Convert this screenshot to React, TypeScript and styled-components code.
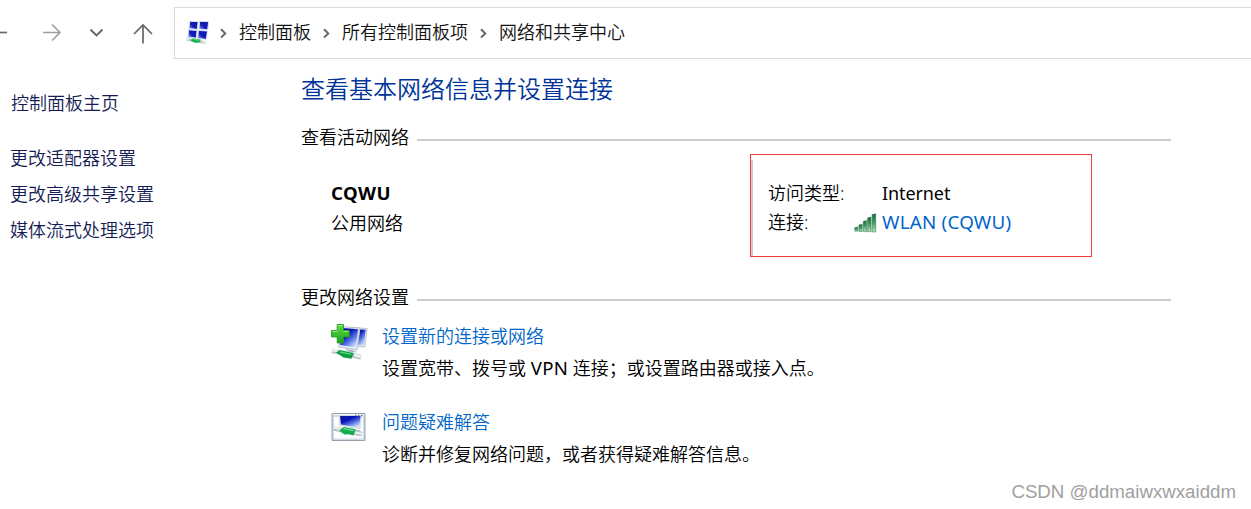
import React from "react";
import styled, { createGlobalStyle } from "styled-components";

const GlobalStyle = createGlobalStyle`
  body {
    margin: 0;
    background: #fff;
    overflow: hidden;
  }
`;

const Window = styled.div`
  position: relative;
  width: 1251px;
  height: 509px;
  overflow: hidden;
  background: #fff;
  color: #000;
  font-family: "Noto Sans", "Noto Sans CJK SC", sans-serif;
  font-size: 18px;
  font-weight: 350;
  white-space: nowrap;
`;

const Toolbar = styled.header`
  display: flex;
  height: 52px;
  padding-top: 7px;
`;

const NavButtons = styled.nav`
  flex: none;
  width: 174px;
  height: 52px;

  svg {
    display: block;
  }
`;

const AddressBar = styled.div`
  display: flex;
  align-items: center;
  box-sizing: border-box;
  flex: none;
  width: 1090px;
  height: 52px;
  padding-left: 10px;
  border: 1px solid #d9d9d9;
`;

const Crumb = styled.span`
  padding-bottom: 2px;
  line-height: 26px;
  color: #111;
`;

const Separator = styled.svg`
  flex: none;
  width: 31px;
  height: 14px;
`;

const Body = styled.div`
  display: flex;
`;

const Sidebar = styled.aside`
  display: flex;
  flex-direction: column;
  box-sizing: border-box;
  flex: none;
  width: 301px;
  padding: 31px 0 0 10px;
`;

const SideLink = styled.a<{ $home?: boolean }>`
  height: 26px;
  padding-left: ${(props) => (props.$home ? 1 : 0)}px;
  margin-bottom: ${(props) => (props.$home ? 29 : 10)}px;
  line-height: 26px;
  color: #151c55;
`;

const Main = styled.main`
  width: 870px;
  padding-top: 12px;
`;

const Title = styled.h1`
  margin: 0 0 18px;
  line-height: 36px;
  font-size: 24px;
  font-weight: 350;
  color: #003399;
`;

const SectionHeader = styled.div`
  display: flex;
  align-items: center;
  height: 24px;
  line-height: 24px;
`;

const Rule = styled.div`
  flex: 1;
  height: 2px;
  margin: 6px 0 0 8px;
  background: #cbcbcb;
`;

const ActiveNetwork = styled.div`
  display: flex;
  padding: 5px 0 28px 30px;
`;

const NetworkName = styled.div`
  box-sizing: border-box;
  width: 419px;
  padding-top: 24px;
  line-height: 30px;
`;

const Name = styled.div`
  font-size: 18.6px;
  font-weight: 700;
  letter-spacing: 0.5px;
`;

const AccessBox = styled.div`
  box-sizing: border-box;
  width: 342px;
  height: 103px;
  padding-top: 5px;
  border: 1px solid #f23b3b;
`;

const AccessDetails = styled.div`
  box-sizing: border-box;
  height: 96px;
  padding: 19px 0 0 15px;
  border-left: 2px solid #cbcbcb;
`;

const AccessRow = styled.div`
  display: grid;
  grid-template-columns: 86px 28px 1fr;
  align-items: center;
  height: 29px;
  line-height: 29px;
`;

const Latin = styled.span<{ $size?: number; $spacing?: number }>`
  font-size: ${(props) => props.$size || 18}px;
  font-weight: 380;
  letter-spacing: ${(props) => props.$spacing || 0}px;
`;

const Link = styled.a`
  color: #0066cc;
`;

const Tasks = styled.div`
  display: flex;
  flex-direction: column;
`;

const Task = styled.div`
  display: flex;
  height: 86px;
  padding-left: 30px;

  > svg {
    flex: none;
    margin: 14px 14px 0 0;
  }
`;

const TaskText = styled.div`
  padding-top: 11px;
  line-height: 32px;
`;

const Watermark = styled.div`
  position: absolute;
  right: 15px;
  bottom: 5px;
  line-height: 24px;
  font-family: "Liberation Sans", sans-serif;
  font-size: 18.7px;
  color: #a0a0a0;
`;

const NavIcons = () => (
  <svg width="174" height="52" fill="none" strokeWidth="1.7">
    <path d="M0 25.5H7" stroke="#666" />
    <path d="M43 25.5H59.5M52 17.5l8 8-8 8" stroke="#a0a0a0" />
    <path d="M90.5 22.5l6 6 6-6" stroke="#666" strokeWidth="1.9" />
    <path d="M143 36.5V18M134 27l9-9 9 9" stroke="#666" />
  </svg>
);

const Chevron = () => (
  <Separator viewBox="0 0 31 14" fill="none">
    <path d="M13 3.2l4.2 4.2-4.2 4.2" stroke="#666" strokeWidth="2" />
  </Separator>
);

const Gradients = () => (
  <svg width="0" height="0" style={{ position: "absolute" }}>
    <defs>
      <linearGradient id="screen" x1="0" y1="0" x2=".8" y2="1">
        <stop offset="0" stopColor="#10189c" />
        <stop offset=".38" stopColor="#0713b8" />
        <stop offset=".65" stopColor="#5271e2" />
        <stop offset="1" stopColor="#dcecff" />
      </linearGradient>
      <linearGradient id="tile" x1="1" y1="0" x2="0" y2="1">
        <stop offset="0" stopColor="#0710a5" />
        <stop offset=".6" stopColor="#1420bd" />
        <stop offset="1" stopColor="#a9c5f7" />
      </linearGradient>
      <linearGradient id="plus" x1="0" y1="0" x2="0" y2="1">
        <stop offset="0" stopColor="#64dc45" />
        <stop offset="1" stopColor="#16a51d" />
      </linearGradient>
      <linearGradient id="bar" x1="0" y1="0" x2="0" y2="1">
        <stop offset="0" stopColor="#176832" />
        <stop offset=".45" stopColor="#3d9460" />
        <stop offset="1" stopColor="#b6e8c5" />
      </linearGradient>
    </defs>
  </svg>
);

const AddressIcon = styled.svg`
  flex: none;
  width: 26px;
  height: 26px;
  margin-right: -3px;
`;

const NetworkIcon = () => (
  <AddressIcon viewBox="0 0 26 26">
    <g stroke="#dce5f3" strokeWidth="1" fill="url(#tile)">
      <path d="M4.8 1.3l8.3.3-.7 7.7-8.6-.6z" />
      <path d="M14.6 1.3l9 .4-.9 8-8.8-.5z" />
      <path d="M3.6 9.8l8.5.6-.8 7.6-8.4-.7z" />
      <path d="M13.4 10.4l9 .6-1 8.3-8.8-.7z" />
    </g>
    <path d="M1.4 19l19 3.6" stroke="#bcc8c5" strokeWidth="3" />
    <path d="M1.2 18.4l3 .6M17.5 21.7l3 .5" stroke="#edf3f0" strokeWidth="1.6" />
    <path d="M5.4 20.6l3-2.4 7.2 1.2-1.2 3.2-4.6.2z" fill="#12b24c" />
    <path d="M8.2 19.1l5.8 1" stroke="#62dd8e" />
  </AddressIcon>
);

const AddNetworkIcon = () => (
  <svg width="37" height="42" viewBox="0 0 37 42">
    <path d="M21 4.5l15.3 1L33.7 24l-12-1.4z" fill="#dce5ef" stroke="#bec7d1" />
    <path d="M23 6l11.7.8-2 15.4-10.2-1.2z" fill="url(#screen)" />
    <path d="M11 3.5L29 5l-3 22L7.5 24z" fill="#e4eaf1" stroke="#b8c3d0" />
    <path d="M12 5l15.2 1.3-2.4 18.2L9 22z" fill="url(#screen)" />
    <path d="M14 26l7 1 5 2-7 1z" fill="#aeb8c3" />
    <path d="M1 27.8l29 6.4" stroke="#b4c1bd" strokeWidth="4.5" />
    <path d="M1 27l6 1.3M23 32.2l7 1.5" stroke="#edf4f1" strokeWidth="2.5" />
    <path d="M5 29.6l4-2.6 13.5 3.2-2 5.6-8-1.4z" fill="#0e9d43" />
    <path d="M9 28.8l11 2.5" stroke="#5cd587" strokeWidth="1.2" />
    <path
      d="M6.2 1.5h6.3v6h5.8v6.4h-5.8v6H6.2v-6H.5V7.5h5.7z"
      fill="url(#plus)"
      stroke="#249925"
      strokeWidth=".9"
    />
    <path d="M7.2 2.5h4.3M1.4 8.4h5.3M12.4 8.4h5" stroke="#9aec7e" />
  </svg>
);

const TroubleshootIcon = () => (
  <svg width="37" height="42" viewBox="0 0 37 42">
    <path d="M1 4.5h33v27H1z" fill="#d3dae3" stroke="#98a2ad" />
    <path d="M3 8h29v21.5H3z" fill="#fbfdff" />
    <path d="M2 5.5h31" stroke="#eef4fa" />
    <path d="M24 6.3h1.5M27 6.3h1.5M30 6.3h1.5" stroke="#667585" />
    <path d="M8 7h23l-1.6 13.5L8 17z" fill="#d8dfe8" />
    <path d="M9 7h20.6L28 18.6 10 15.6z" fill="url(#screen)" />
    <path d="M20 20l9 1.6 1.5 2.4-6 .5z" fill="#a5aeb8" />
    <path d="M3 19.6l28 5.6" stroke="#bac4c2" strokeWidth="4.5" />
    <path d="M3 18.6l6 1.3M24 23.4l7 1.4" stroke="#edf3f1" strokeWidth="2" />
    <path d="M8.5 22l4-4 12 2.2-2 6.3-5-1.2-4 .2z" fill="#14ad4d" />
    <path d="M12.5 19.6l10 2" stroke="#6be095" strokeWidth="1.2" />
  </svg>
);

const SignalIcon = () => (
  <svg width="23" height="20" viewBox="0 0 23 20">
    <g fill="url(#bar)" stroke="#397c50" strokeWidth=".6">
      <path d="M.8 14.6l3-.6v4.2l-3-.1z" />
      <path d="M4.9 12l3.2-.7v7.2l-3.2-.2z" />
      <path d="M9.2 8.4l3.3-.8v11l-3.3-.1z" />
      <path d="M13.6 4.9l3.4-.8v14.7l-3.4-.2z" />
      <path d="M18.1 1.6l3.6-.9V19l-3.6-.2z" />
    </g>
  </svg>
);

const crumbs = ["控制面板", "所有控制面板项", "网络和共享中心"];
const sideLinks = ["更改适配器设置", "更改高级共享设置", "媒体流式处理选项"];

const App: React.FC = () => {
  return (
    <Window>
      <GlobalStyle />
      <Gradients />
      <Toolbar>
        <NavButtons>
          <NavIcons />
        </NavButtons>
        <AddressBar>
          <NetworkIcon />
          {crumbs.map((crumb) => (
            <React.Fragment key={crumb}>
              <Chevron />
              <Crumb>{crumb}</Crumb>
            </React.Fragment>
          ))}
        </AddressBar>
      </Toolbar>
      <Body>
        <Sidebar>
          <SideLink $home>控制面板主页</SideLink>
          {sideLinks.map((label) => (
            <SideLink key={label}>{label}</SideLink>
          ))}
        </Sidebar>
        <Main>
          <Title>查看基本网络信息并设置连接</Title>
          <SectionHeader>
            查看活动网络
            <Rule />
          </SectionHeader>
          <ActiveNetwork>
            <NetworkName>
              <Name>CQWU</Name>
              <div>公用网络</div>
            </NetworkName>
            <AccessBox>
              <AccessDetails>
                <AccessRow>
                  <span>访问类型:</span>
                  <span />
                  <Latin $spacing={-0.1}>Internet</Latin>
                </AccessRow>
                <AccessRow>
                  <span>连接:</span>
                  <SignalIcon />
                  <Link>
                    <Latin $size={18.8} $spacing={0.22}>
                      WLAN (CQWU)
                    </Latin>
                  </Link>
                </AccessRow>
              </AccessDetails>
            </AccessBox>
          </ActiveNetwork>
          <SectionHeader>
            更改网络设置
            <Rule />
          </SectionHeader>
          <Tasks>
            <Task>
              <AddNetworkIcon />
              <TaskText>
                <Link>设置新的连接或网络</Link>
                <div>
                  设置宽带、拨号或{" "}
                  <Latin $size={18.6} $spacing={0.3}>
                    VPN
                  </Latin>{" "}
                  连接；或设置路由器或接入点。
                </div>
              </TaskText>
            </Task>
            <Task>
              <TroubleshootIcon />
              <TaskText>
                <Link>问题疑难解答</Link>
                <div>诊断并修复网络问题，或者获得疑难解答信息。</div>
              </TaskText>
            </Task>
          </Tasks>
        </Main>
      </Body>
      <Watermark>CSDN @ddmaiwxwxaiddm</Watermark>
    </Window>
  );
};

export default App;
